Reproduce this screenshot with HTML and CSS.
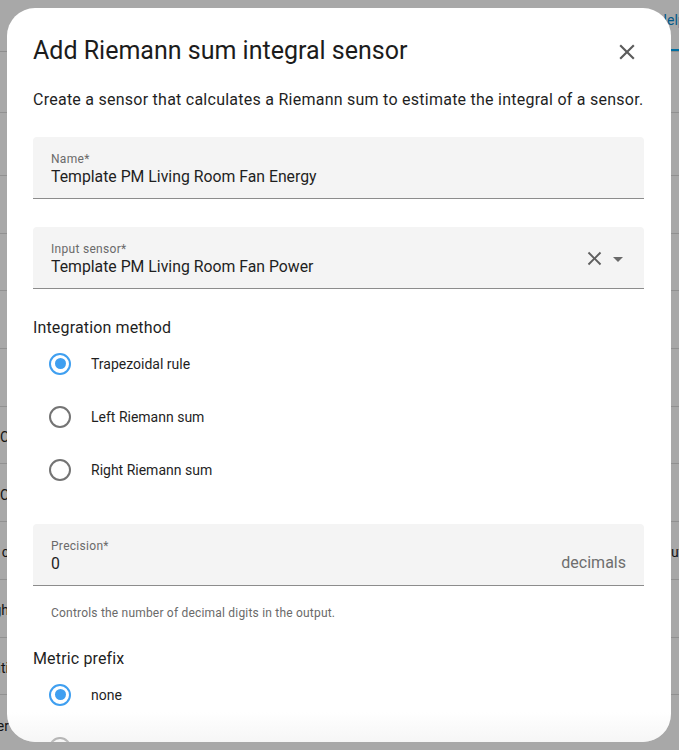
FILE: index.html
```html
<!DOCTYPE html>
<html>
<head>
<meta charset="utf-8">
<link rel="stylesheet" href="styles.css">
</head>
<body>
<div class="page">
  <div class="tabbar">
    <div class="tab">Entities</div>
    <div class="tab active">Helpers</div>
  </div>
  <div class="row r1"><div class="lcell"></div><div class="rcell"></div></div>
  <div class="row r2"><div class="lcell"></div><div class="rcell"></div></div>
  <div class="row"><div class="lcell"></div><div class="rcell"></div></div>
  <div class="row"><div class="lcell"></div><div class="rcell"></div></div>
  <div class="row"><div class="lcell"></div><div class="rcell"></div></div>
  <div class="row"><div class="lcell"></div><div class="rcell"></div></div>
  <div class="row"><div class="lcell"><span>Template C</span></div><div class="rcell"></div></div>
  <div class="row"><div class="lcell"><span>Template C</span></div><div class="rcell"></div></div>
  <div class="row"><div class="lcell"><span>Sensor c</span></div><div class="rcell"><span>utput</span></div></div>
  <div class="row"><div class="lcell"><span>Light gh</span></div><div class="rcell"></div></div>
  <div class="row"><div class="lcell"><span>Utiliti</span></div><div class="rcell"></div></div>
  <div class="row"><div class="lcell"><span>Timer</span></div><div class="rcell"></div></div>
</div>
<div class="scrim"></div>

<div class="dialog">
  <div class="dialog-header">
    <h2 class="dialog-title">Add Riemann sum integral sensor</h2>
    <button class="icon-btn close-btn" aria-label="Close">
      <svg viewBox="0 0 24 24" width="26" height="26"><path d="M19,6.41L17.59,5L12,10.59L6.41,5L5,6.41L10.59,12L5,17.59L6.41,19L12,13.41L17.59,19L19,17.59L13.41,12L19,6.41Z"/></svg>
    </button>
  </div>
  <div class="dialog-content">
    <p class="description">Create a sensor that calculates a Riemann sum to estimate the integral of a sensor.</p>

    <div class="field field-name">
      <div class="field-text">
        <div class="field-label">Name*</div>
        <div class="field-value">Template PM Living Room Fan Energy</div>
      </div>
    </div>

    <div class="field field-input">
      <div class="field-text">
        <div class="field-label">Input sensor*</div>
        <div class="field-value">Template PM Living Room Fan Power</div>
      </div>
      <div class="field-icons">
        <svg class="clear-icon" viewBox="0 0 24 24" width="23" height="23"><path d="M19,6.41L17.59,5L12,10.59L6.41,5L5,6.41L10.59,12L5,17.59L6.41,19L12,13.41L17.59,19L19,17.59L13.41,12L19,6.41Z"/></svg>
        <svg class="menu-icon" viewBox="0 0 24 24" width="24" height="24"><path d="M7,10L12,15L17,10H7Z"/></svg>
      </div>
    </div>

    <div class="section-title st-integration">Integration method</div>
    <div class="radio-group">
      <div class="radio-row"><span class="radio checked"></span><span class="radio-label">Trapezoidal rule</span></div>
      <div class="radio-row"><span class="radio"></span><span class="radio-label">Left Riemann sum</span></div>
      <div class="radio-row"><span class="radio"></span><span class="radio-label">Right Riemann sum</span></div>
    </div>

    <div class="field field-precision">
      <div class="field-text">
        <div class="field-label">Precision*</div>
        <div class="field-value">0</div>
      </div>
      <div class="field-suffix">decimals</div>
    </div>
    <div class="helper">Controls the number of decimal digits in the output.</div>

    <div class="section-title st-metric">Metric prefix</div>
    <div class="radio-group">
      <div class="radio-row"><span class="radio checked"></span><span class="radio-label">none</span></div>
      <div class="radio-row"><span class="radio"></span><span class="radio-label">kilo</span></div>
    </div>
  </div>
  <div class="bottom-fade"></div>
</div>
</body>
</html>
```

FILE: styles.css
```css
* { box-sizing: border-box; }
html, body {
  margin: 0;
  padding: 0;
  width: 679px;
  height: 750px;
  overflow: hidden;
  font-family: Roboto, "Noto Sans", sans-serif;
  background: #ffffff;
}

/* background page */
.page {
  width: 679px;
  height: 750px;
  display: flex;
  flex-direction: column;
  background: #fafafa;
}
.tabbar {
  height: 52px;
  flex: none;
  display: flex;
  justify-content: flex-end;
  align-items: stretch;
  border-bottom: 1px solid #d8d8d8;
  background: #ffffff;
}
.tab {
  display: flex;
  align-items: flex-start;
  padding: 12px 0 0 0;
  font-size: 14px;
  color: #666;
  width: 80px;
  white-space: nowrap;
}
.tab.active {
  color: #0288d1;
  border-bottom: 2px solid #03a9f4;
  width: 30px;
  padding-left: 0;
  margin-right: -8px;
  overflow: hidden;
}
.row {
  height: 57.7px;
  flex: none;
  display: flex;
  justify-content: space-between;
  align-items: center;
  border-bottom: 1px solid #dcdcdc;
  background: #ffffff;
  font-size: 14px;
  color: #212121;
}
.row.r1 { height: 61px; }
.row.r2 { height: 63px; }
.lcell {
  width: 9px;
  display: flex;
  justify-content: flex-end;
  white-space: nowrap;
  padding-top: 4px;
}
.rcell {
  width: 8px;
  white-space: nowrap;
  padding-top: 4px;
  overflow: hidden;
}

.scrim {
  position: absolute;
  inset: 0;
  background: rgba(0, 0, 0, 0.34);
}

/* dialog */
.dialog {
  position: absolute;
  left: 7px;
  top: 8px;
  width: 664px;
  height: 734px;
  background: #ffffff;
  border-radius: 28px;
  overflow: hidden;
  display: flex;
  flex-direction: column;
  padding: 0 27px 0 26px;
}
.dialog-header {
  height: 48px;
  margin-top: 20px;
  display: flex;
  align-items: center;
  justify-content: space-between;
  flex: none;
}
.dialog-title {
  margin: 0;
  font-size: 25px;
  line-height: 32px;
  font-weight: 400;
  color: #1c1c1c;
  margin-top: -3px;
}
.icon-btn {
  border: 0;
  background: transparent;
  padding: 0;
  width: 48px;
  height: 48px;
  display: flex;
  align-items: center;
  justify-content: center;
}
.close-btn { margin-right: -7px; }
.close-btn svg { fill: #5c5c5c; }

.dialog-content {
  flex: 1;
  display: flex;
  flex-direction: column;
}
.description {
  margin: 12px 0 0 0;
  font-size: 16px;
  line-height: 24px;
  color: #1f1f1f;
  letter-spacing: 0.25px;
}

.field {
  height: 62px;
  background: #f4f4f4;
  border-radius: 4px 4px 0 0;
  border-bottom: 1px solid #8c8c8c;
  display: flex;
  align-items: stretch;
  padding: 0 18px;
  flex: none;
}
.field-name { margin-top: 25px; }
.field-input { margin-top: 28px; }
.field-precision { margin-top: 28px; }
.field-text {
  flex: 1;
  display: flex;
  flex-direction: column;
  padding-top: 14px;
}
.field-label {
  font-size: 12px;
  line-height: 16px;
  color: #6a6a6a;
  letter-spacing: 0.3px;
}
.field-value {
  font-size: 15.8px;
  line-height: 20px;
  color: #1f1f1f;
  letter-spacing: 0;
  margin-top: 0;
}
.field-icons {
  display: flex;
  align-items: center;
  padding-top: 2px;
  margin-right: -4px;
}
.clear-icon { fill: #5f5f5f; margin-right: 0; }
.menu-icon { fill: #6a6a6a; }
.field-suffix {
  display: flex;
  align-items: flex-end;
  padding-bottom: 13px;
  font-size: 16px;
  color: #6e6e6e;
  letter-spacing: 0;
}

.section-title {
  font-size: 16px;
  line-height: 24px;
  color: #1f1f1f;
  letter-spacing: 0.15px;
  flex: none;
}
.st-integration { margin-top: 27px; }
.st-metric { margin-top: 26px; }

.radio-group {
  display: flex;
  flex-direction: column;
  flex: none;
  margin-top: -3px;
}
.radio-row {
  height: 53px;
  display: flex;
  align-items: center;
  padding-left: 7px;
}
.radio {
  width: 40px;
  height: 40px;
  position: relative;
  flex: none;
}
.radio::before {
  content: "";
  position: absolute;
  left: 9px;
  top: 9px;
  width: 22px;
  height: 22px;
  border-radius: 50%;
  border: 2px solid #747474;
  box-sizing: border-box;
}
.radio.checked::before { border-color: #3f9ff0; }
.radio.checked::after {
  content: "";
  position: absolute;
  left: 14.5px;
  top: 14.5px;
  width: 11px;
  height: 11px;
  border-radius: 50%;
  background: #3f9ff0;
}
.radio-label {
  margin-left: 11px;
  font-size: 14px;
  line-height: 20px;
  color: #1f1f1f;
  letter-spacing: 0;
}

.helper {
  margin-top: 19px;
  padding-left: 18px;
  font-size: 12px;
  line-height: 16px;
  color: #6a6a6a;
  letter-spacing: 0.2px;
  flex: none;
}

.bottom-fade {
  position: absolute;
  left: 0;
  right: 0;
  bottom: 0;
  height: 30px;
  background: linear-gradient(to bottom, rgba(240, 240, 240, 0), rgba(240, 240, 240, 0.6));
  pointer-events: none;
}
```
